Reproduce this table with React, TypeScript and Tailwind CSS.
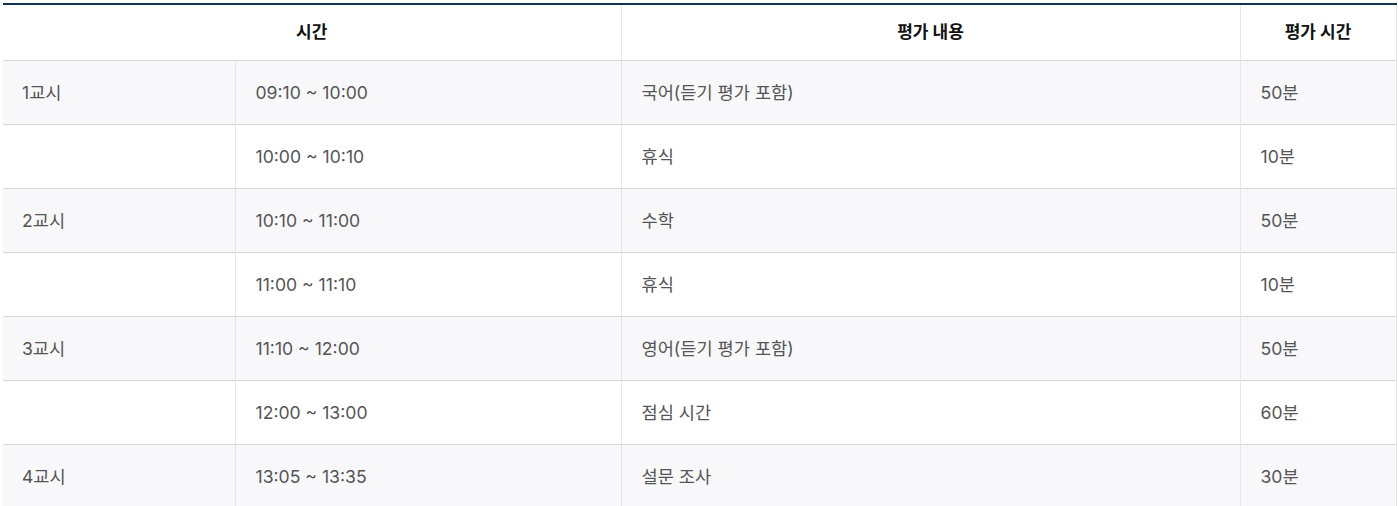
import React from "react";

const rows = [
  { p: "1교시", t: "09:10 ~ 10:00", c: "국어(듣기 평가 포함)", d: "50분", shade: true },
  { p: "", t: "10:00 ~ 10:10", c: "휴식", d: "10분", shade: false },
  { p: "2교시", t: "10:10 ~ 11:00", c: "수학", d: "50분", shade: true },
  { p: "", t: "11:00 ~ 11:10", c: "휴식", d: "10분", shade: false },
  { p: "3교시", t: "11:10 ~ 12:00", c: "영어(듣기 평가 포함)", d: "50분", shade: true },
  { p: "", t: "12:00 ~ 13:00", c: "점심 시간", d: "60분", shade: false },
  { p: "4교시", t: "13:05 ~ 13:35", c: "설문 조사", d: "30분", shade: true },
];

export default function App() {
  return (
    <div
      className="w-[1398px] h-[506px] overflow-hidden bg-white pt-[3px] pl-[3px]"
      style={{ fontFamily: '"Inter", "Noto Sans CJK KR", sans-serif' }}
    >
      <table className="w-[1393px] border-collapse table-fixed border-t-2 border-[#0f3350]">
        <colgroup>
          <col className="w-[232px]" />
          <col className="w-[386px]" />
          <col className="w-[619px]" />
          <col className="w-[156px]" />
        </colgroup>
        <thead>
          <tr className="h-[56px] border-b border-[#d6d6d6]">
            <th colSpan={2} className="border-r border-[#e6e6e6] text-[17px] font-bold text-[#111] text-center">
              시간
            </th>
            <th className="border-r border-[#e6e6e6] text-[17px] font-bold text-[#111] text-center">
              평가 내용
            </th>
            <th className="border-r border-[#e6e6e6] text-[17px] font-bold text-[#111] text-center">
              평가 시간
            </th>
          </tr>
        </thead>
        <tbody>
          {rows.map((r, i) => (
            <tr
              key={i}
              className={`h-[64px] border-b border-[#d6d6d6] text-[17.6px] text-[#555] ${r.shade ? "bg-[#f8f8fa]" : "bg-white"}`}
            >
              <td className="pl-[19px] pt-[2px] border-r border-[#e6e6e6]">{r.p}</td>
              <td className="pl-[20px] pt-[2px] border-r border-[#e6e6e6]">{r.t}</td>
              <td className="pl-[20px] pt-[2px] border-r border-[#e6e6e6]">{r.c}</td>
              <td className="pl-[20px] pt-[2px] border-r border-[#e6e6e6]">{r.d}</td>
            </tr>
          ))}
        </tbody>
      </table>
    </div>
  );
}
